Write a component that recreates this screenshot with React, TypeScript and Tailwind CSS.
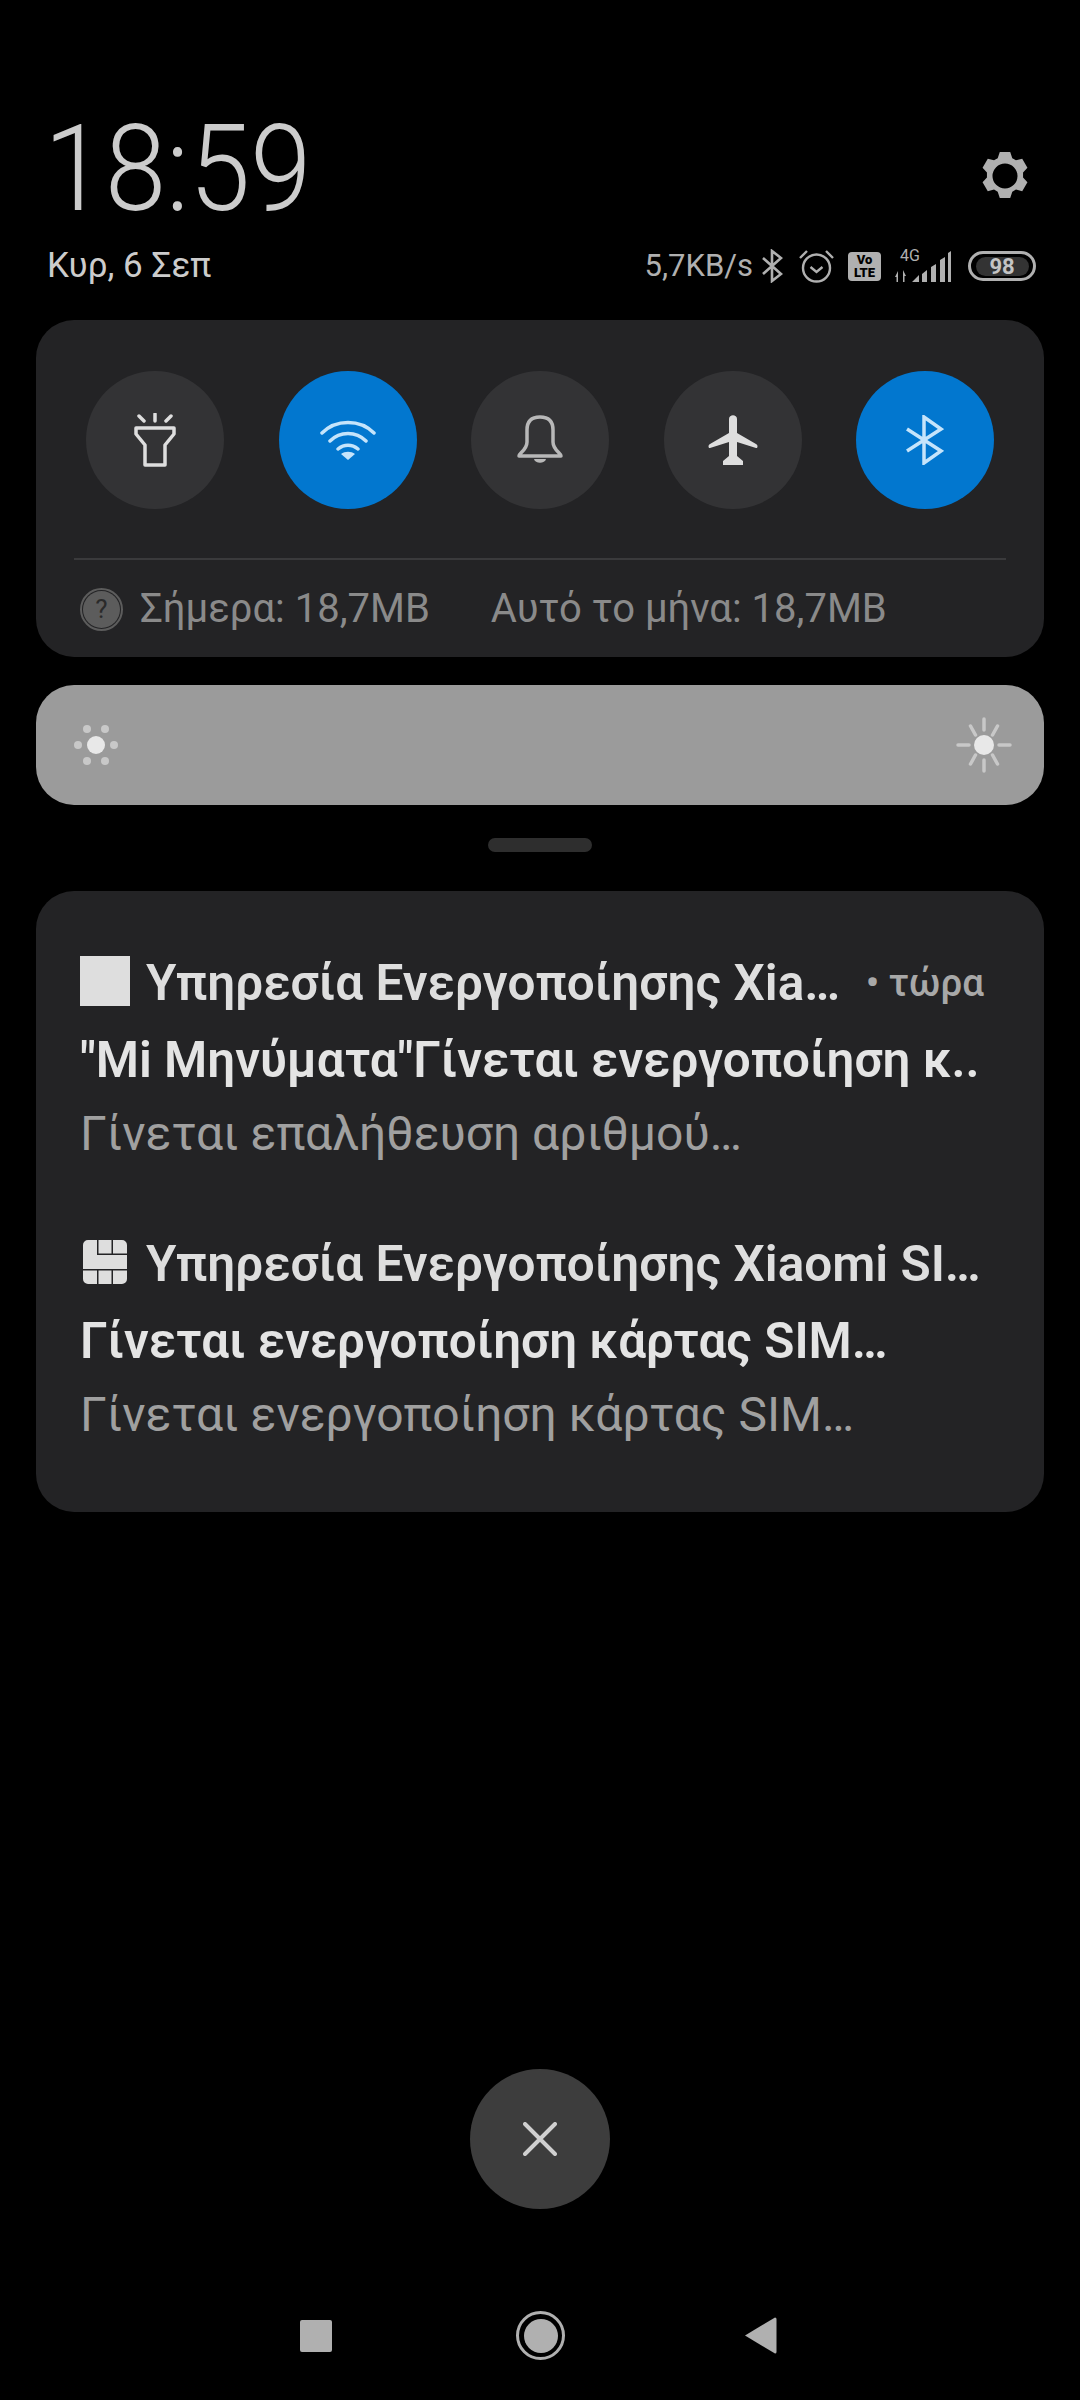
const sans = "font-['Roboto',sans-serif]";

const Gear = () => (
  <svg width="48" height="48" viewBox="1 1 46 46" fill="#b0b0b0">
    <path
      fillRule="evenodd"
      d="M19 1h10l2 6 3.500 2 6-1.500 5 8.500-4.200 4.600v4.800l4.200 4.600-5 8.500-6-1.500-3.500 2-2 6H19l-2-6-3.500-2-6 1.500-5-8.500 4.200-4.600v-4.800L2.500 16l5-8.500 6 1.500 3.500-2zM24 12a12 12 0 1 0 0 24 12 12 0 0 0 0-24z"
    />
  </svg>
);

const StatusIcons = () => (
  <div className="flex items-center">
    <svg width="21" height="34" viewBox="0 0 21 34" fill="none" stroke="#b0b0b0" strokeWidth="2.600" className="ml-[9px]">
      <path d="M1 9l18 16-9 7V2l9 7L1 25" />
    </svg>
    <svg width="35" height="34" viewBox="0 0 35 34" fill="none" stroke="#b0b0b0" strokeWidth="2.400" className="ml-[16px]">
      <circle cx="17.500" cy="19" r="13.500" />
      <path d="M11.500 18l6 5 6-5M1 9l7-7M34 9l-7-7" />
    </svg>
    <div className="ml-[14px] flex h-[29px] w-[33px] flex-col items-center justify-center rounded-[4px] bg-[#b0b0b0] text-[13px] leading-[13px] font-black text-black">
      <span>Vo</span>
      <span>LTE</span>
    </div>
    <div className="relative ml-[14px] h-[33px] w-[57px]">
      <span className="absolute top-[-3px] left-[5px] text-[16px] leading-[18px] text-[#b0b0b0]">4G</span>
      <svg width="57" height="33" viewBox="0 0 57 33" fill="#b0b0b0">
        <path d="M0 27l3-6v11H1.500v-5zM8 32V20l3 6H9.500v6z" />
        <path d="M17 32l7-7v7zM27 24l5-4v12h-5zM36 17l5-3v18h-5zM45 10l5-3v25h-5zM53 3l3-2v31h-3z" />
      </svg>
    </div>
    <div className="ml-[16px] flex h-[30px] w-[68px] items-center justify-center rounded-full border-[3px] border-[#b0b0b0]">
      <div className="flex h-[19px] w-[53px] items-center justify-center rounded-full bg-[#333333] text-[22px] leading-[19px] font-bold text-[#c4c4c4]">
        98
      </div>
    </div>
  </div>
);

const Round = ({ on, children }: { on?: boolean; children: React.ReactNode }) => (
  <div className={on ? "flex h-[138px] w-[138px] items-center justify-center rounded-full bg-[#0277cf]" : "flex h-[138px] w-[138px] items-center justify-center rounded-full bg-[#333335]"}>
    {children}
  </div>
);

const QuickToggles = () => (
  <div className="flex justify-between px-[50px] pt-[51px]">
    <Round>
      <svg width="42" height="54" viewBox="0 0 42 54" fill="none" stroke="#dedede" strokeWidth="3.500" strokeLinecap="round" strokeLinejoin="round">
        <path d="M2 15h38v6l-9 11v20H11V32L2 21zM21 1v7M5 3l5 5M37 3l-5 5" />
      </svg>
    </Round>
    <Round on>
      <svg width="56" height="40" viewBox="0 0 56 40" fill="none" stroke="#c5e4fb" strokeWidth="3.500" strokeLinecap="round">
        <path d="M2 13C16 -1 40 -1 54 13M10 21c10-10 26-10 36 0M18 29c6-5 14-5 20 0" />
        <path d="M28 40l-7-6c4-3 10-3 14 0z" fill="#c5e4fb" stroke="none" />
      </svg>
    </Round>
    <Round>
      <svg width="46" height="50" viewBox="0 0 46 50" fill="none" stroke="#b8b8b8" strokeWidth="3.500" strokeLinejoin="round">
        <path d="M2 41c0-3 8-6 8-14V15C10 6 15 2 23 2s13 4 13 13v12c0 8 8 11 8 14z" />
        <path d="M17 44h12c-1 5-11 5-12 0z" fill="#b8b8b8" stroke="none" />
      </svg>
    </Round>
    <Round>
      <svg width="50" height="50" viewBox="0 0 50 50" fill="#dedede">
        <path d="M21 4c0-5 8-5 8 0v14l19 11c2 1 2 4 0 4l-19-6v14l6 5v4H15v-4l6-5V27L2 33c-2 0-2-3 0-4l19-11z" />
      </svg>
    </Round>
    <Round on>
      <svg width="38" height="50" viewBox="0 0 38 50" fill="none" stroke="#c5e4fb" strokeWidth="3.500">
        <path d="M1 14l34 22-17 12V2l17 12L1 36" />
      </svg>
    </Round>
  </div>
);

const DataUsage = () => (
  <div className={`${sans} mx-[38px] mt-[49px] flex items-center border-t-2 border-[#3a3a3c] pt-[27px] text-[40px] leading-[44px] text-[#8a8a8a]`}>
    <div className="ml-[6px] flex h-[43px] w-[43px] items-center justify-center rounded-full border-2 border-[#5c5c5c] p-[1px]">
      <div className="flex h-full w-full items-center justify-center rounded-full bg-[#5c5c5c] text-[26px] leading-none text-[#2a2a2a]">?</div>
    </div>
    <span className="ml-[17px]">Σήμερα: 18,7MB</span>
    <span className="ml-[61px]">Αυτό το μήνα: 18,7MB</span>
  </div>
);

const SunSmall = () => (
  <svg width="44" height="40" viewBox="0 0 44 40" fill="#c8c8c8">
    <circle cx="22" cy="20" r="9" fill="#e8e8e8" />
    <ellipse cx="13" cy="4" rx="4" ry="4" />
    <ellipse cx="31" cy="4" rx="4" ry="4" />
    <ellipse cx="4" cy="20" rx="4" ry="4" />
    <ellipse cx="40" cy="20" rx="4" ry="4" />
    <ellipse cx="13" cy="36" rx="4" ry="4" />
    <ellipse cx="31" cy="36" rx="4" ry="4" />
  </svg>
);

const SunBig = () => (
  <svg width="56" height="56" viewBox="0 0 56 56" fill="none" stroke="#c8c8c8" strokeWidth="3.500" strokeLinecap="round">
    <circle cx="28" cy="28" r="10" fill="#e8e8e8" stroke="none" />
    <path d="M28 2v11M28 43v11M14.500 9l5 9M41.500 9l-5 9M14.500 47l5-9M41.500 47l-5-9M2 28h11M43 28h11" />
  </svg>
);

const SimIcon = () => (
  <svg width="44" height="44" viewBox="0 0 44 44" fill="#dedede">
    <path d="M5 0h9v15h30v14H0V5a5 5 0 0 1 5-5zM15.500 0h13v13.500h-13zM30 0h9a5 5 0 0 1 5 5v8.500H30zM0 30.500h14V44H5a5 5 0 0 1-5-5zM15.500 30.500h13V44h-13zM30 30.500h14V39a5 5 0 0 1-5 5h-9z" />
  </svg>
);

const Notification = ({ icon, title, time, body, sub }: { icon: React.ReactNode; title: string; time?: string; body: string; sub: string }) => (
  <div className={sans}>
    <div className="flex h-[50px] items-center">
      <div className="flex w-[50px] justify-center">{icon}</div>
      <span className="ml-[16px] pt-[4px] text-[49.500px] leading-[50px] font-semibold text-[#dedede]">{title}</span>
      {time && <span className="ml-auto pt-[4px] text-[38.500px] leading-[50px] font-medium text-[#a8a8a8]">{time}</span>}
    </div>
    <div className="mt-[29px] text-[49.400px] leading-[50px] font-semibold text-[#e4e4e4]">{body}</div>
    <div className="mt-[24px] text-[48px] leading-[50px] text-[#a0a0a0]">{sub}</div>
  </div>
);

export default function App() {
  return (
    <div className={`${sans} flex h-[2400px] w-[1080px] flex-col bg-black`}>
      <div className="flex items-start justify-between pt-[92px] pr-[51px] pl-[44px]">
        <div className="origin-top-left scale-y-[1.1] text-[110px] leading-[140px] font-light text-[#cccccc]">18:59</div>
        <div className="pt-[60px]">
          <Gear />
        </div>
      </div>
      <div className="mt-[14px] flex items-center justify-between pr-[44px] pl-[47px]">
        <span className="text-[35px] leading-[40px] text-[#cccccc]">Κυρ, 6 Σεπ</span>
        <div className="flex items-center">
          <span className="text-[31px] leading-[40px] text-[#b0b0b0]">5,7KB/s</span>
          <StatusIcons />
        </div>
      </div>

      <div className="mx-[36px] mt-[34px] h-[337px] rounded-[38px] bg-[#232325]">
        <QuickToggles />
        <DataUsage />
      </div>

      <div className="mx-[36px] mt-[28px] flex h-[120px] items-center justify-between rounded-[38px] bg-[#9b9b9b] pr-[32px] pl-[38px]">
        <SunSmall />
        <SunBig />
      </div>

      <div className="mx-auto mt-[33px] h-[14px] w-[104px] rounded-full bg-[#2e2e2e]" />

      <div className="mx-[36px] mt-[39px] flex h-[621px] flex-col gap-[78px] rounded-[38px] bg-[#232325] pt-[65px] pr-[60px] pl-[44px]">
        <Notification
          icon={<div className="h-[50px] w-[50px] bg-[#dedede]" />}
          title="Υπηρεσία Ενεργοποίησης Xia…"
          time="• τώρα"
          body={'"Mi Μηνύματα"Γίνεται ενεργοποίηση κ..'}
          sub="Γίνεται επαλήθευση αριθμού…"
        />
        <Notification
          icon={<SimIcon />}
          title="Υπηρεσία Ενεργοποίησης Xiaomi SI…"
          body="Γίνεται ενεργοποίηση κάρτας SIM…"
          sub="Γίνεται ενεργοποίηση κάρτας SIM…"
        />
      </div>

      <div className="mx-auto mt-[557px] flex h-[140px] w-[140px] items-center justify-center rounded-full bg-[#3d3d3d]">
        <svg width="34" height="34" viewBox="0 0 34 34" stroke="#d0d0d0" strokeWidth="4" strokeLinecap="round">
          <path d="M2 2l30 30M32 2L2 32" />
        </svg>
      </div>

      <div className="mt-[102px] flex items-center pl-[300px]">
        <div className="h-[32px] w-[32px] rounded-[2px] bg-[#b0b0b0]" />
        <div className="ml-[184px] flex h-[49px] w-[49px] items-center justify-center rounded-full border-[3px] border-[#b0b0b0]">
          <div className="h-[34px] w-[34px] rounded-full bg-[#b0b0b0]" />
        </div>
        <svg width="32" height="37" viewBox="0 0 32 37" fill="#b0b0b0" className="ml-[180px]">
          <path d="M0 18.500L30 0.500q1.500 0 1.500 1.500v33q0 1.500-1.500 1.500z" />
        </svg>
      </div>
    </div>
  );
}
